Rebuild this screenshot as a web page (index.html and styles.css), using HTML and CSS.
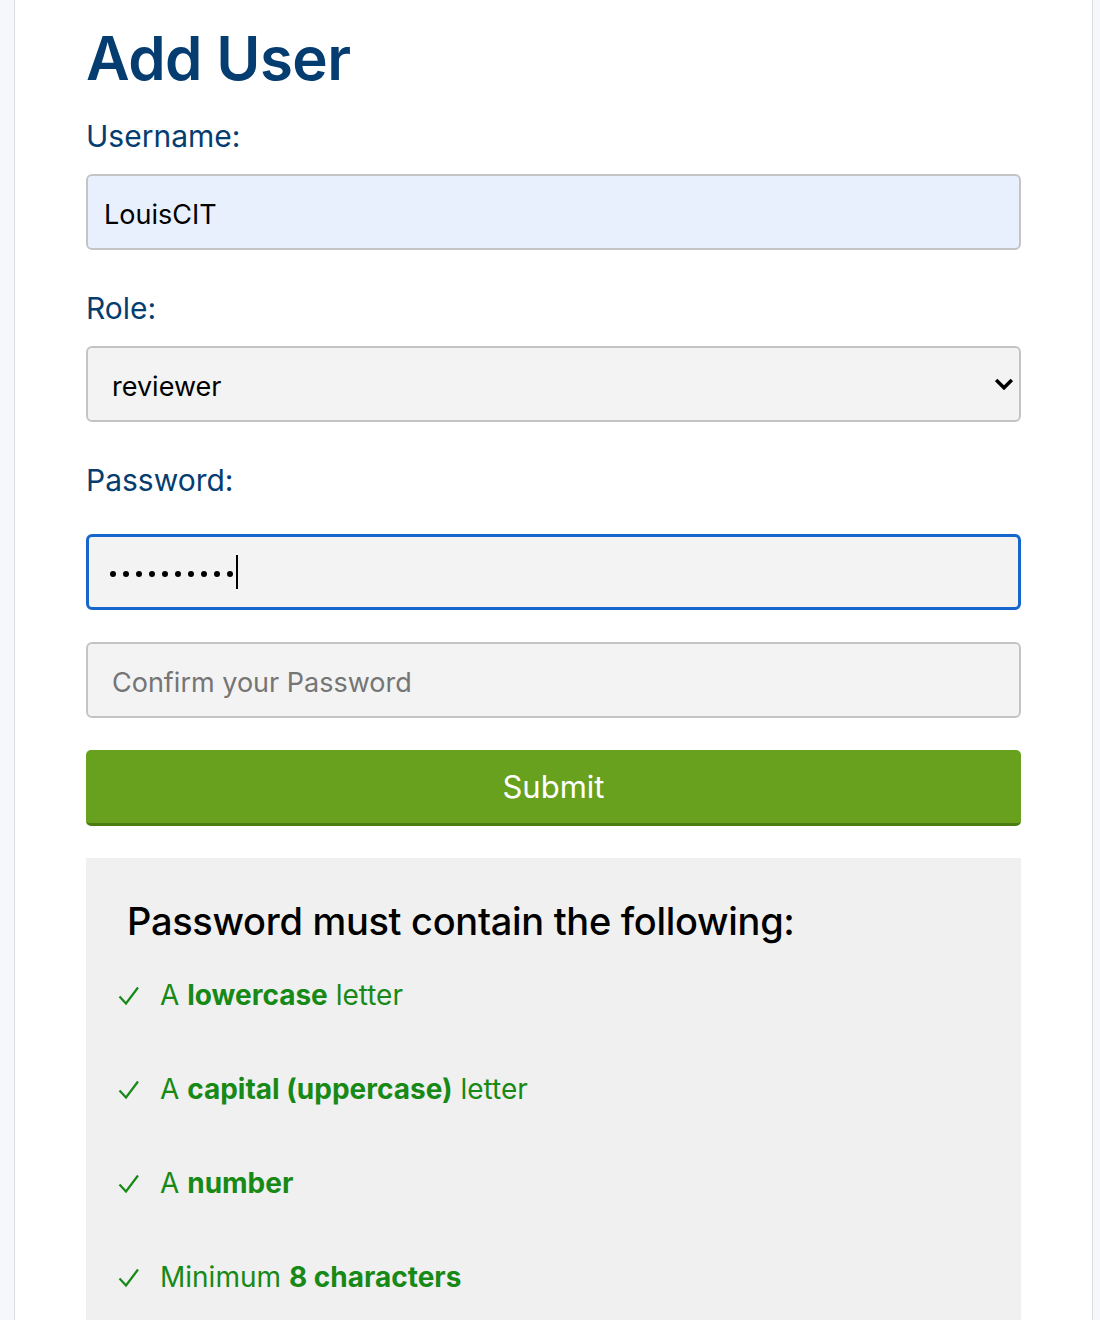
FILE: index.html
```html
<!DOCTYPE html>
<html lang="en">
<head>
<meta charset="utf-8">
<title>Add User</title>
<link rel="stylesheet" href="styles.css">
</head>
<body>
<div class="page">
  <main class="card">
    <h1 class="title">Add User</h1>
    <form class="form">
      <label class="label" for="username">Username:</label>
      <input class="field field-autofill" id="username" type="text" value="LouisCIT">

      <label class="label" for="role">Role:</label>
      <div class="select-wrap">
        <select class="field field-select" id="role">
          <option>reviewer</option>
        </select>
        <svg class="chevron" viewBox="0 0 16 10" width="18" height="11" aria-hidden="true"><path d="M2 2l6 6 6-6" fill="none" stroke="#000" stroke-width="3.2" stroke-linecap="square"/></svg>
      </div>

      <label class="label label-pw" for="password">Password:</label>
      <div class="field field-focus pw-field" id="password">
        <span class="dot"></span><span class="dot"></span><span class="dot"></span><span class="dot"></span><span class="dot"></span><span class="dot"></span><span class="dot"></span><span class="dot"></span><span class="dot"></span><span class="dot"></span><span class="caret"></span>
      </div>

      <input class="field field-confirm" type="password" placeholder="Confirm your Password">

      <button class="submit" type="button">Submit</button>
    </form>

    <section class="rules">
      <h2 class="rules-title">Password must contain the following:</h2>
      <ul class="rules-list">
        <li class="rule"><svg class="check" viewBox="0 0 22 20" width="22" height="20" aria-hidden="true"><path d="M1.5 10.5L8 17.5L20 1.5" fill="none" stroke="currentColor" stroke-width="2.2"/></svg><span>A <b>lowercase</b> letter</span></li>
        <li class="rule"><svg class="check" viewBox="0 0 22 20" width="22" height="20" aria-hidden="true"><path d="M1.5 10.5L8 17.5L20 1.5" fill="none" stroke="currentColor" stroke-width="2.2"/></svg><span>A <b>capital (uppercase)</b> letter</span></li>
        <li class="rule"><svg class="check" viewBox="0 0 22 20" width="22" height="20" aria-hidden="true"><path d="M1.5 10.5L8 17.5L20 1.5" fill="none" stroke="currentColor" stroke-width="2.2"/></svg><span>A <b>number</b></span></li>
        <li class="rule"><svg class="check" viewBox="0 0 22 20" width="22" height="20" aria-hidden="true"><path d="M1.5 10.5L8 17.5L20 1.5" fill="none" stroke="currentColor" stroke-width="2.2"/></svg><span>Minimum <b>8 characters</b></span></li>
      </ul>
    </section>
  </main>
</div>
</body>
</html>
```

FILE: styles.css
```css
* { box-sizing: border-box; }
html, body { margin: 0; padding: 0; }
body {
  background: #f5f7fc;
  font-family: Inter, "Noto Sans", sans-serif;
  color: #000;
}
.page {
  padding: 0 7px 0 14px;
}
.card {
  background: #fff;
  border-left: 1px solid #dddddf;
  border-right: 1px solid #dddddf;
  padding: 22px 71px 0 71px;
  min-height: 1320px;
}
.title {
  margin: 0;
  font-size: 60px;
  font-weight: 600;
  color: #063d70;
  line-height: 72px;
  letter-spacing: -0.6px;
}
.form {
  display: flex;
  flex-direction: column;
}
.label {
  font-size: 30px;
  color: #063d70;
  line-height: 36px;
  margin-top: 40px;
  margin-bottom: 20px;
}
.label:first-child { margin-top: 24px; }
.field {
  width: 100%;
  height: 76px;
  border: 2px solid #c4c4c4;
  border-radius: 6px;
  background: #f3f3f3;
  font-family: Inter, "Noto Sans", sans-serif;
  font-size: 27px;
  color: #000;
  padding: 4px 24px 0;
  outline: none;
}
.field-autofill {
  background: #e8f0fe;
  padding-left: 16px;
}
.select-wrap {
  position: relative;
}
.field-select {
  appearance: none;
  -webkit-appearance: none;
}
.chevron {
  position: absolute;
  right: 8px;
  top: 33px;
}
.label-pw { margin-bottom: 36px; }
.field-focus {
  border: 3px solid #1766cc;
  display: flex;
  align-items: center;
  gap: 7px;
  padding: 0 0 0 21px;
}
.dot {
  width: 6px;
  height: 6px;
  border-radius: 50%;
  background: #000;
  margin-top: 3px;
}
.caret {
  width: 2px;
  height: 34px;
  background: #000;
  margin-left: -4px;
}
.field-confirm {
  margin-top: 32px;
}
.field-confirm::placeholder { color: #757575; }
.submit {
  margin-top: 32px;
  height: 76px;
  background: #68a11d;
  border: none;
  border-bottom: 3px solid #4b7c12;
  border-radius: 5px;
  color: #fff;
  font-family: Inter, "Noto Sans", sans-serif;
  font-size: 31px;
}
.rules {
  margin-top: 32px;
  background: #f0f0f0;
  padding: 38px 40px 40px 32px;
}
.rules-title {
  margin: 0 0 0 9px;
  font-size: 38px;
  font-weight: 500;
  line-height: 50px;
  letter-spacing: -0.3px;
}
.rules-list {
  list-style: none;
  margin: 0;
  padding: 0;
}
.rule {
  display: flex;
  align-items: center;
  gap: 20px;
  color: #178917;
  font-size: 28px;
  height: 94px;
}
.rule:first-child { margin-top: 2px; }
.check {
  flex: none;
  margin-top: 2px;
}
.rule b { font-weight: 700; }
```
